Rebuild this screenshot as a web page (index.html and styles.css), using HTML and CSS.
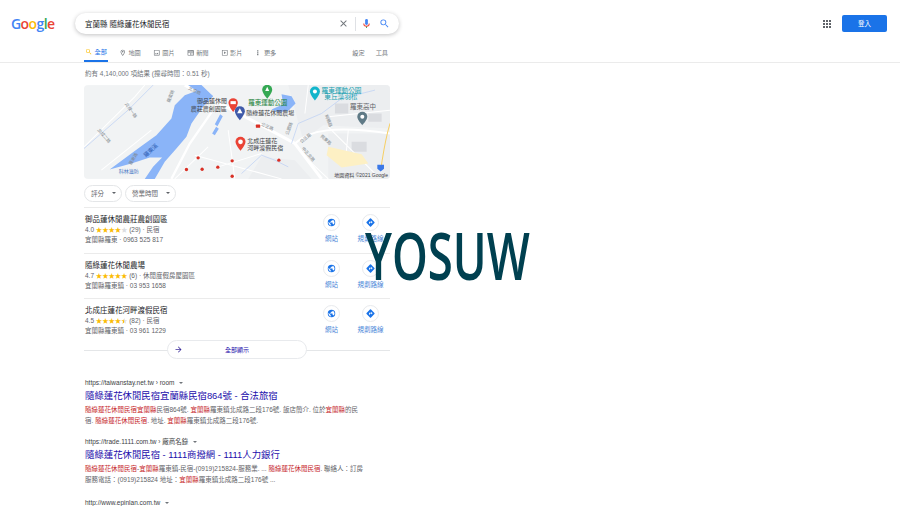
FILE: index.html
```html
<!DOCTYPE html>
<html lang="zh-Hant">
<head>
  <meta charset="UTF-8" />
  <title>宜蘭縣 隨綠蓮花休閒民宿 - Google 搜尋</title>
  <link rel="stylesheet" href="styles.css">
</head>
<body>
  <svg class="defs" width="0" height="0">
    <symbol id="globe" viewBox="0 0 24 24">
      <path fill="#1a73e8" d="M12 2a10 10 0 1 0 0 20 10 10 0 0 0 0-20zM4 12c0-.6.1-1.200.2-1.800L9 15v1c0 1.100.9 2 2 2v2c-3.900-.5-7-3.900-7-8zm13.900 5.400c-.3-.8-1-1.400-1.900-1.400h-1v-3c0-.6-.4-1-1-1H8v-2h2c.6 0 1-.4 1-1V7h2c1.100 0 2-.9 2-2v-.4c2.900 1.200 5 4.100 5 7.400 0 2.100-.8 4-2.100 5.400z"/>
    </symbol>
    <symbol id="route" viewBox="0 0 24 24">
      <path fill="#1a73e8" d="M22.400 10.600l-9-9a2 2 0 0 0-2.800 0l-9 9a2 2 0 0 0 0 2.800l9 9a2 2 0 0 0 2.800 0l9-9a2 2 0 0 0 0-2.800zM14 14.500V12h-4v3H8v-4c0-.6.400-1 1-1h5V7.500l3.500 3.500-3.500 3.500z"/>
    </symbol>
    <symbol id="magnifier" viewBox="0 0 24 24">
      <path d="M15.500 14h-.79l-.28-.27A6.470 6.470 0 0 0 16 9.500 6.500 6.500 0 1 0 9.500 16c1.610 0 3.090-.59 4.230-1.570l.27.28v.79l5 4.990L20.490 19l-4.990-5zm-6 0C7.010 14 5 11.990 5 9.500S7.010 5 9.500 5 14 7.010 14 9.500 11.990 14 9.500 14z"/>
    </symbol>
  </svg>

  <header class="top">
    <div class="logo"><span class="b">G</span><span class="r">o</span><span class="y">o</span><span class="b">g</span><span class="g">l</span><span class="r">e</span></div>
    <div class="searchbox">
      <span class="query">宜蘭縣 隨綠蓮花休閒民宿</span>
      <svg class="ico-x" viewBox="0 0 24 24"><path fill="#70757a" d="M19 6.400 17.600 5 12 10.600 6.400 5 5 6.400l5.600 5.600L5 17.600 6.400 19l5.600-5.600 5.600 5.600 1.400-1.400-5.600-5.600z"/></svg>
      <span class="sep"></span>
      <svg class="ico-mic" viewBox="0 0 24 24">
        <path fill="#4285f4" d="M12 15a3 3 0 0 0 3-3V5a3 3 0 0 0-6 0v7a3 3 0 0 0 3 3z"/>
        <path fill="#34a853" d="M11 18h2v4h-2z"/>
        <path fill="#ea4335" d="M7 12H5a7 7 0 0 0 14 0h-2a5 5 0 0 1-10 0z"/>
      </svg>
      <svg class="ico-search"><use href="#magnifier"/></svg>
    </div>
    <div class="top-right">
      <svg class="ico-apps" viewBox="0 0 24 24"><path fill="#5f6368" d="M4 4h4v4H4zM10 4h4v4h-4zM16 4h4v4h-4zM4 10h4v4H4zM10 10h4v4h-4zM16 10h4v4h-4zM4 16h4v4H4zM10 16h4v4h-4zM16 16h4v4h-4z"/></svg>
      <a class="signin">登入</a>
    </div>
  </header>

  <nav class="tabs">
    <a class="tab active">
      <svg class="tab-search"><use href="#magnifier"/></svg>全部
    </a>
    <a class="tab">
      <svg viewBox="0 0 24 24"><path fill="#70757a" d="M12 2a7 7 0 0 0-7 7c0 5.200 7 13 7 13s7-7.800 7-13a7 7 0 0 0-7-7zm0 2a5 5 0 0 1 5 5c0 2.900-2.900 7.200-5 9.900C9.900 16.200 7 11.900 7 9a5 5 0 0 1 5-5zm0 2.500a2.500 2.500 0 1 0 0 5 2.500 2.500 0 0 0 0-5z"/></svg>地圖
    </a>
    <a class="tab">
      <svg viewBox="0 0 24 24"><path fill="#70757a" d="M19 3H5a2 2 0 0 0-2 2v14c0 1.100.9 2 2 2h14a2 2 0 0 0 2-2V5a2 2 0 0 0-2-2zm0 16H5V5h14v14zM14 12l-3 3.700L9 13l-3 4h12z"/></svg>圖片
    </a>
    <a class="tab">
      <svg viewBox="0 0 24 24"><path fill="#70757a" d="M22 3l-2 1.500L18 3l-2 1.500L14 3l-2 1.500L10 3 8 4.500 6 3 4 4.500 2 3v16a2 2 0 0 0 2 2h16a2 2 0 0 0 2-2V3zM11 19H4v-6h7v6zm9 0h-7v-2h7v2zm0-4h-7v-2h7v2zm0-4H4V8h16v3z"/></svg>新聞
    </a>
    <a class="tab">
      <svg viewBox="0 0 24 24"><path fill="#70757a" d="M4 3h16a1 1 0 0 1 1 1v16a1 1 0 0 1-1 1H4a1 1 0 0 1-1-1V4a1 1 0 0 1 1-1zm1 2v14h14V5H5zm5 3 6 4-6 4V8z"/></svg>影片
    </a>
    <a class="tab">
      <svg viewBox="0 0 24 24"><path fill="#70757a" d="M10 4h4v4h-4zM10 10h4v4h-4zM10 16h4v4h-4z"/></svg>更多
    </a>
    <span class="tab-tools">
      <a>設定</a>
      <a>工具</a>
    </span>
  </nav>

  <main class="results">
    <div class="stats">約有 4,140,000 項結果 (搜尋時間：0.51 秒)</div>

    <div class="map">
      <svg viewBox="28 15 917 281" width="306" height="94">
        <rect x="28" y="15" width="917" height="281" fill="#f1f3f4"/>
        <path fill="#eceef0" d="M640 15h305v130l-200-10-60 45zM760 160h185v136H760zM560 230l100 10 50 56H520z"/>
        <path fill="#dadce0" d="M830 185h45v30h-45zM780 70h40v30h-40zM880 100h40v25h-40z"/>
        <g fill="none" stroke="#fff">
          <path stroke-width="9" d="M330 15 540 125 660 190 740 296"/>
          <path stroke-width="7" d="M425 75 345 190 290 296"/>
          <path stroke-width="6" d="M660 190C700 150 780 135 945 160"/>
          <path stroke-width="3" d="M28 200 180 50 210 15M80 270 230 150M360 225 620 296M300 296 400 200M430 260 560 220M690 230 760 296M760 140 900 280M820 150 810 260M700 15 690 100M760 110 945 90M460 150 480 296"/>
        </g>
        <path fill="none" stroke="#b8cdf5" stroke-width="2" d="M28 205 160 90 235 15M650 190 670 130 740 100 800 55 900 30M500 280 560 225 600 240 640 260"/>
        <path fill="#fdf0c4" d="M760 200 860 222 880 250 800 262 755 225z"/>
        <path fill="none" stroke="#f6cf65" stroke-width="3" d="M945 130C930 180 925 220 918 262"/>
        <path fill="#8ab4f8" d="M415 48 385 80 350 130 335 170 305 205 270 245 240 296H210L235 260 262 232 225 232 170 250 105 268 190 205 245 165 290 115 300 75 330 45 385 25z"/>
        <path fill="#8ab4f8" d="M620 42 650 48 662 70 640 92 610 96 590 88 625 72zM436 102 444 108 428 138 420 132zM424 140 432 146 420 165 412 160zM340 15h40l35 33-20 5z"/>
        <g fill="#d93025">
          <circle cx="370" cy="233" r="5"/><circle cx="472" cy="242" r="5"/><circle cx="612" cy="240" r="5"/>
          <circle cx="382" cy="267" r="5"/><circle cx="429" cy="261" r="5"/><circle cx="335" cy="268" r="5"/><circle cx="472" cy="288" r="5"/>
          <rect x="543" y="133" width="13" height="10" rx="2"/>
        </g>
        <g>
          <path fill="#ea4335" d="M475 54a14 14 0 0 1 14 14c0 10-14 28-14 28s-14-18-14-28a14 14 0 0 1 14-14z"/>
          <rect x="467" y="63" width="16" height="9" fill="#fff"/>
          <path fill="#34a853" d="M577 14a15 15 0 0 1 15 15c0 10-15 27-15 27s-15-17-15-27a15 15 0 0 1 15-15z"/>
          <path fill="#fff" d="M577 20l6 13h-12z"/>
          <path fill="#12b5cb" d="M720 19a15 15 0 0 1 15 15c0 10-15 27-15 27s-15-17-15-27a15 15 0 0 1 15-15z"/>
          <circle cx="720" cy="34" r="6" fill="#fff"/>
          <path fill="#3f5aa9" d="M495 78a15 15 0 0 1 15 15c0 10-15 27-15 27s-15-17-15-27a15 15 0 0 1 15-15z"/>
          <path fill="#fff" d="M495 84l8 15h-16z"/>
          <path fill="#ea4335" d="M497 170a15 15 0 0 1 15 15c0 10-15 27-15 27s-15-17-15-27a15 15 0 0 1 15-15z"/>
          <circle cx="497" cy="185" r="7" fill="#fff"/>
          <path fill="#5f7a86" d="M862 95a15 15 0 0 1 15 15c0 10-15 25-15 25s-15-15-15-25a15 15 0 0 1 15-15z"/>
          <circle cx="862" cy="110" r="6" fill="#fff"/>
          <path fill="#3b78e7" d="M907 254h20v12l-10 8-10-8z"/>
        </g>
        <g class="maptext">
          <text x="367" y="70">御品蓮休閒</text>
          <text x="348" y="92">農莊農創園區</text>
          <text x="514" y="105">隨綠蓮花休閒農場</text>
          <text x="517" y="188">北成庄蓮花</text>
          <text x="517" y="208">河畔渡假民宿</text>
          <text x="520" y="74" class="mt-green">羅東運動公園</text>
          <text x="740" y="38" class="mt-teal">羅東運動公園</text>
          <text x="748" y="58" class="mt-teal">東丘藻羽松</text>
          <text x="825" y="88" class="mt-gray">羅東高中</text>
          <text x="132" y="278" class="mt-blue">科林滋防</text>
          <text x="213" y="232" class="mt-river" transform="rotate(-42 213 232)">羅東溪</text>
          <text x="340" y="28" class="mt-road" transform="rotate(25 340 28)">北成橋</text>
          <text x="285" y="68" class="mt-road" transform="rotate(-70 285 68)">羅東路</text>
          <text x="150" y="72" class="mt-road" transform="rotate(55 150 72)">北成一路</text>
          <text x="68" y="150" class="mt-road" transform="rotate(50 68 150)">北成二路</text>
          <text x="170" y="255" class="mt-road" transform="rotate(-60 170 255)">羅東路</text>
          <text x="558" y="135" class="mt-road" transform="rotate(25 558 135)">公正路</text>
          <text x="640" y="165" class="mt-road" transform="rotate(-70 640 165)">公園路</text>
          <text x="680" y="190" class="mt-road" transform="rotate(-40 680 190)">公正路</text>
          <text x="735" y="170" class="mt-road" transform="rotate(40 735 170)">興東路</text>
          <text x="680" y="205" class="mt-road" transform="rotate(50 680 205)">中正北路</text>
          <text x="750" y="105" class="mt-road" transform="rotate(70 750 105)">純精路</text>
          <text x="778" y="290" class="mt-credit">地圖資料 ©2021 Google</text>
        </g>
      </svg>
    </div>

    <div class="chips">
      <span class="chip">評分<i class="caret"></i></span>
      <span class="chip">營業時間<i class="caret"></i></span>
    </div>

    <div class="place">
      <div class="place-info">
        <div class="place-name">御品蓮休閒農莊農創園區</div>
        <div class="place-line">4.0 <span class="stars">★★★★<span class="off">★</span></span> (29) · 民宿</div>
        <div class="place-line">宜蘭縣羅東 · 0963 525 817</div>
      </div>
      <a class="action"><span class="action-ico"><svg><use href="#globe"/></svg></span>網站</a>
      <a class="action"><span class="action-ico"><svg><use href="#route"/></svg></span>規劃路線</a>
    </div>
    <div class="place">
      <div class="place-info">
        <div class="place-name">隨綠蓮花休閒農場</div>
        <div class="place-line">4.7 <span class="stars">★★★★★</span> (6) · 休閒度假房屋園區</div>
        <div class="place-line">宜蘭縣羅東鎮 · 03 953 1658</div>
      </div>
      <a class="action"><span class="action-ico"><svg><use href="#globe"/></svg></span>網站</a>
      <a class="action"><span class="action-ico"><svg><use href="#route"/></svg></span>規劃路線</a>
    </div>
    <div class="place">
      <div class="place-info">
        <div class="place-name">北成庄蓮花河畔渡假民宿</div>
        <div class="place-line">4.5 <span class="stars">★★★★<span class="half">★</span></span> (82) · 民宿</div>
        <div class="place-line">宜蘭縣羅東鎮 · 03 961 1229</div>
      </div>
      <a class="action"><span class="action-ico"><svg><use href="#globe"/></svg></span>網站</a>
      <a class="action"><span class="action-ico"><svg><use href="#route"/></svg></span>規劃路線</a>
    </div>

    <div class="more-wrap">
      <a class="more">
        <svg viewBox="0 0 24 24"><path fill="#3c2d9b" d="M12 4l-1.400 1.400L16.200 11H4v2h12.200l-5.600 5.600L12 20l8-8z"/></svg>
        <span>全部顯示</span>
      </a>
    </div>

    <div class="result">
      <div class="cite">https://taiwanstay.net.tw › room<i class="caret small"></i></div>
      <h3>隨綠蓮花休閒民宿宜蘭縣民宿864號 - 合法旅宿</h3>
      <p><em>隨綠蓮花休閒民宿宜蘭縣</em>民宿864號. <em>宜蘭縣</em>羅東鎮北成路二段176號. 飯店簡介. 位於<em>宜蘭縣</em>的民<br>宿. <em>隨綠蓮花休閒民宿</em>. 地址. <em>宜蘭縣</em>羅東鎮北成路二段176號.</p>
    </div>
    <div class="result">
      <div class="cite">https://trade.1111.com.tw › 廠商名錄<i class="caret small"></i></div>
      <h3>隨綠蓮花休閒民宿 - 1111商撥網 - 1111人力銀行</h3>
      <p><em>隨綠蓮花休閒民宿</em>-<em>宜蘭縣</em>羅東鎮-民宿-(0919)215824-服務業. ... <em>隨綠蓮花休閒民宿</em>. 聯絡人：訂房<br>服務電話：(0919)215824 地址：<em>宜蘭縣</em>羅東鎮北成路二段176號 ...</p>
    </div>
    <div class="result last">
      <div class="cite">http://www.epinlan.com.tw<i class="caret small"></i></div>
    </div>
  </main>

  <div class="watermark">YOSUW</div>
</body>
</html>
```

FILE: styles.css
```css
* { box-sizing: border-box; }

html, body {
  margin: 0;
  padding: 0;
  height: 506px;
  overflow: hidden;
  background: #fff;
  color: #3c4043;
  font-family: "Liberation Sans", "Noto Sans CJK TC", sans-serif;
}

a { color: inherit; text-decoration: none; }

.defs { position: absolute; }

/* top bar */
.top {
  display: flex;
  align-items: center;
  height: 45px;
  padding: 2px 13px 0 11px;
}

.logo {
  width: 64px;
  font-family: "Open Sans", sans-serif;
  font-size: 14px;
  font-weight: 600;
  letter-spacing: -0.6px;
}
.logo .b { color: #4285f4; }
.logo .r { color: #ea4335; }
.logo .y { color: #fbbc05; }
.logo .g { color: #34a853; }

.searchbox {
  display: flex;
  align-items: center;
  width: 324px;
  height: 21px;
  padding: 0 9px 0 10px;
  border-radius: 11px;
  background: #fff;
  box-shadow: 0 1px 4px rgba(32, 33, 36, 0.28);
}

.query {
  flex: 1;
  font-size: 7.500px;
  color: #202124;
}

.ico-x { width: 11px; height: 11px; }
.sep { width: 1px; height: 14px; margin: 0 5px 0 6px; background: #dfe1e5; }
.ico-mic { width: 11px; height: 11px; margin-right: 7px; }
.ico-search { width: 11px; height: 11px; fill: #4285f4; }

.top-right {
  display: flex;
  align-items: center;
  margin-left: auto;
}
.ico-apps { width: 12px; height: 12px; margin-right: 9px; }

.signin {
  width: 45px;
  height: 17px;
  border-radius: 2px;
  background: #1a73e8;
  color: #fff;
  font-size: 6.500px;
  line-height: 17px;
  text-align: center;
}

/* tabs */
.tabs {
  display: flex;
  align-items: flex-start;
  height: 18px;
  padding-left: 84px;
  border-bottom: 1px solid #ebebeb;
  font-size: 6.200px;
  color: #70757a;
}

.tab {
  display: flex;
  align-items: center;
  height: 17px;
  margin-right: 12px;
  padding-bottom: 2px;
  gap: 2px;
}
.tab svg { width: 7.500px; height: 7.500px; }
.tab .tab-search { fill: #fbbc04; }
.tab.active {
  padding: 0 1px 2px;
  margin-right: 11px;
  border-bottom: 2px solid #1a73e8;
  color: #1a73e8;
}

.tab-tools {
  display: flex;
  gap: 11px;
  height: 17px;
  margin-left: 64px;
  padding-bottom: 2px;
  align-items: center;
}

/* results column */
.results {
  width: 390px;
  padding-left: 84px;
}

.stats {
  height: 22px;
  padding: 5px 0 0 1px;
  font-size: 6.500px;
  color: #70757a;
}

.map { width: 306px; height: 94px; border-radius: 4px; overflow: hidden; }
.map svg { display: block; }

.maptext text { font-size: 18px; fill: #3c4043; }
.maptext .mt-green { fill: #188038; font-size: 19.500px; }
.maptext .mt-teal { fill: #129eaf; font-size: 20px; }
.maptext .mt-gray { fill: #5f6368; font-size: 19.500px; }
.maptext .mt-blue { fill: #4a78c5; font-size: 15px; }
.maptext .mt-river { fill: #2f5fb5; font-size: 17px; }
.maptext .mt-road { fill: #80868b; font-size: 13px; }
.maptext .mt-credit { font-size: 15px; }

.chips {
  display: flex;
  gap: 3px;
  height: 28px;
  padding-top: 5.500px;
}

.chip {
  display: flex;
  align-items: center;
  justify-content: space-between;
  height: 17px;
  padding: 0 5px 0 6px;
  border: 1px solid #e4e6e8;
  border-radius: 9px;
  font-size: 6.500px;
  color: #5f6368;
}
.chip:first-child { width: 38px; }
.chip:last-child { width: 51px; }

.caret {
  display: inline-block;
  width: 0;
  height: 0;
  border-left: 2.500px solid transparent;
  border-right: 2.500px solid transparent;
  border-top: 2.500px solid #5f6368;
}
.caret.small { margin-left: 5px; vertical-align: middle; border-top-color: #70757a; }

.place {
  display: flex;
  height: 45.500px;
  padding-top: 6px;
  border-top: 1px solid #ebebeb;
}

.place-info { flex: 1; padding-left: 1px; }
.place-name { height: 11px; font-size: 7.500px; line-height: 11px; color: #202124; }
.place-line { height: 10px; font-size: 6.500px; line-height: 10px; color: #5f6368; }

.stars { color: #fbbc04; font-size: 6.500px; letter-spacing: -0.2px; }
.stars .off { color: #dadce0; }
.stars .half {
  background: linear-gradient(90deg, #fbbc04 50%, #dadce0 50%);
  -webkit-background-clip: text;
  background-clip: text;
  color: transparent;
}

.action {
  display: flex;
  flex-direction: column;
  align-items: center;
  width: 39px;
  font-size: 6.500px;
  color: #4a86d8;
}

.action-ico {
  display: flex;
  align-items: center;
  justify-content: center;
  width: 17px;
  height: 17px;
  margin-bottom: 2px;
  border: 1px solid #e8eaed;
  border-radius: 50%;
}
.action-ico svg { width: 9px; height: 9px; }

.more-wrap {
  position: relative;
  display: flex;
  justify-content: center;
  height: 19px;
  margin-top: -4px;
}
.more-wrap::before {
  content: "";
  position: absolute;
  left: 0;
  right: 0;
  top: 10px;
  border-top: 1px solid #e4e6e8;
}

.more {
  position: relative;
  display: flex;
  align-items: center;
  width: 140px;
  height: 19px;
  padding-left: 6px;
  border: 1px solid #e8eaed;
  border-radius: 10px;
  background: #fff;
  font-size: 6px;
  color: #1a0dab;
}
.more svg { width: 9px; height: 9px; }
.more span { margin-left: 42px; }

.result { width: 288px; margin-left: 1px; }
.more-wrap + .result { margin-top: 18px; }
.result + .result { margin-top: 9.500px; }
.result.last { margin-top: 12px; }

.cite { height: 11px; font-size: 6.500px; line-height: 11px; color: #3c4043; }

.result h3 {
  margin: 1.500px 0 1px;
  font-size: 9.400px;
  font-weight: 400;
  line-height: 14px;
  color: #1a0dab;
}

.result p {
  margin: 0;
  font-size: 6.500px;
  line-height: 11px;
  color: #5f6368;
}
.result em { font-style: normal; color: #c5221f; }

/* stamped across the page */
.watermark {
  position: absolute;
  left: 365px;
  top: 212px;
  font-family: "Open Sans", sans-serif;
  font-size: 66px;
  font-weight: 600;
  line-height: 84px;
  color: #004050;
  transform: scaleX(0.69);
  transform-origin: left top;
}
```
